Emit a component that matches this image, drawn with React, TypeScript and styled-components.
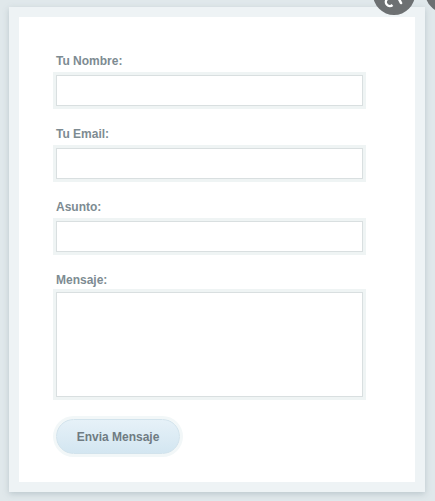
import styled, { createGlobalStyle } from "styled-components";

const GlobalStyle = createGlobalStyle`
    html, body {
        margin: 0;
        padding: 0;
        background: #e0e8eb;
        font-family: "Liberation Sans", Arial, sans-serif;
    }
`;

interface Field {
    label: string;
    multiline?: boolean;
}

const fields: Field[] = [
    { label: "Tu Nombre:" },
    { label: "Tu Email:" },
    { label: "Asunto:" },
    { label: "Mensaje:", multiline: true },
];

const App = () => {
    return (
        <>
            <GlobalStyle />
            <Page>
                <Panel>
                    <Card>
                        {fields.map((f) => (
                            <FieldGroup key={f.label}>
                                <Label>{f.label}</Label>
                                {f.multiline ? <TextArea /> : <Input type="text" />}
                            </FieldGroup>
                        ))}
                        <SendButton type="button">Envia Mensaje</SendButton>
                    </Card>
                </Panel>
                <Bubble $left={373} $top={-27}>
                    <svg width="42" height="42" viewBox="0 0 42 42">
                        <path d="M19.5 26 A4 4 0 1 0 19.5 32" fill="none" stroke="#fff" strokeWidth="2.4" />
                        <path d="M26 26 L28 30" fill="none" stroke="#fff" strokeWidth="2.6" strokeLinecap="round" />
                    </svg>
                </Bubble>
                <Bubble $left={425} $top={-29} />
            </Page>
        </>
    );
};

const Page = styled.div`
    position: relative;
    width: 435px;
    height: 501px;
    overflow: hidden;
    padding: 7px 0 0 9px;
    box-sizing: border-box;
`;

const Panel = styled.div`
    width: 416px;
    height: 485px;
    box-sizing: border-box;
    padding: 10px;
    background: #eef3f5;
    box-shadow: 0 2px 6px rgba(120, 140, 150, 0.35);
`;

const Card = styled.div`
    height: 100%;
    box-sizing: border-box;
    background: #ffffff;
    padding: 37px 37px 0 37px;
    display: flex;
    flex-direction: column;
    align-items: flex-start;
`;

const FieldGroup = styled.div`
    display: flex;
    flex-direction: column;
    margin-bottom: 21px;
`;

const Label = styled.label`
    font-size: 12px;
    line-height: 14px;
    font-weight: bold;
    color: #7d8b92;
    margin-bottom: 7px;
`;

const Input = styled.input`
    width: 307px;
    height: 31px;
    box-sizing: border-box;
    border: 1px solid #d9dfe0;
    background: #ffffff;
    box-shadow: 0 0 0 3px #eff4f4;
    outline: none;
    padding: 4px 6px;
`;

const TextArea = styled.textarea`
    width: 307px;
    height: 105px;
    box-sizing: border-box;
    border: 1px solid #d9dfe0;
    background: #ffffff;
    box-shadow: 0 0 0 3px #eff4f4;
    outline: none;
    resize: none;
    padding: 4px 6px;
    margin-top: -2px;
`;

const SendButton = styled.button`
    margin-top: 1px;
    width: 124px;
    height: 35px;
    border-radius: 18px;
    border: 1px solid #d2e3ec;
    background: linear-gradient(#e6f1f8, #d3e6f1);
    box-shadow: 0 0 0 3px #f2f7f8;
    font-family: "Liberation Sans", Arial, sans-serif;
    font-size: 12px;
    font-weight: bold;
    color: #6f7b82;
    cursor: pointer;
`;

const Bubble = styled.div<{ $left: number; $top: number }>`
    position: absolute;
    left: ${(p) => p.$left}px;
    top: ${(p) => p.$top}px;
    width: 42px;
    height: 42px;
    border-radius: 50%;
    background: #6d7072;
`;

export default App;
